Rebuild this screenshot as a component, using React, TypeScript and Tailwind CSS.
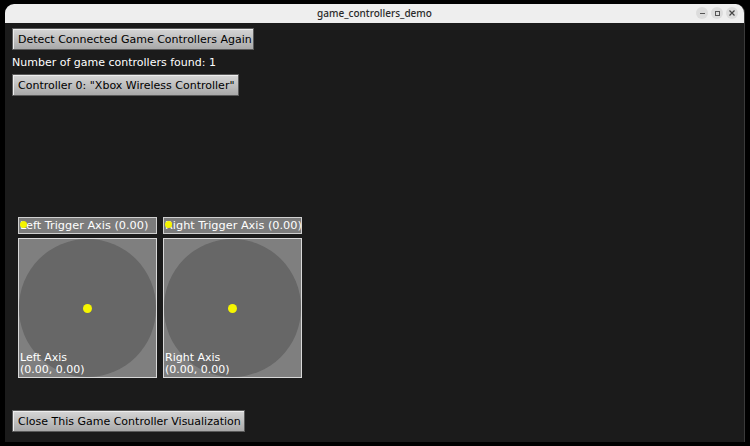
import React from "react";

const btn =
  "h-[22px] px-[5px] flex items-center whitespace-nowrap border border-[#5a5a5a] bg-gradient-to-b from-[#d6d6d6] to-[#a9a9a9] text-black text-[11px] leading-none shadow-[inset_1px_1px_0_#eeeeee]";

function TriggerBar({ label }: { label: string }) {
  return (
    <div className="relative w-[139px] h-[17px] bg-[#7c7c7c] border border-[#d0d0d0] flex items-center">
      <div className="absolute left-[1px] top-[3px] w-[7px] h-[7px] rounded-full bg-[#f5f500]" />
      <span className="pl-[1px] text-white text-[11.3px] leading-none whitespace-nowrap">{label}</span>
    </div>
  );
}

function AxisBox({ l1, l2 }: { l1: string; l2: string }) {
  return (
    <div className="relative w-[139px] h-[140px] bg-[#7f7f7f] border border-[#d8d8d8] overflow-hidden">
      <div className="absolute left-[0px] top-[0px] w-[137px] h-[138px] rounded-full bg-[#676767]" />
      <div className="absolute left-[64px] top-[65px] w-[9px] h-[9px] rounded-full bg-[#f5f500]" />
      <div className="absolute left-[1px] bottom-[1px] text-white text-[11px] leading-[12px]">
        <div>{l1}</div>
        <div>{l2}</div>
      </div>
    </div>
  );
}

export default function App() {
  return (
    <div
      className="w-[750px] h-[446px] bg-black pt-[4px] px-[5px] pb-[4px]"
      style={{ fontFamily: '"DejaVu Sans", sans-serif' }}
    >
      <div className="w-full h-full flex flex-col rounded-t-[9px] overflow-hidden border-r border-[#3a3a3a]">
        <div className="h-[19px] bg-[#eeeeee] relative flex items-center justify-center">
          <span
            className="text-[10px] text-[#2a2a2a] font-medium"
            style={{ fontFamily: '"Noto Sans", "DejaVu Sans", sans-serif' }}
          >
            game_controllers_demo
          </span>
          <div className="absolute right-[6px] top-[3px] flex gap-[3px]">
            <div className="w-[12px] h-[12px] rounded-full bg-[#dcdcdc] flex items-center justify-center">
              <div className="w-[5px] h-[1px] bg-[#555]" />
            </div>
            <div className="w-[12px] h-[12px] rounded-full bg-[#dcdcdc] flex items-center justify-center">
              <div className="w-[5px] h-[5px] border border-[#555]" />
            </div>
            <div className="w-[12px] h-[12px] rounded-full bg-[#dcdcdc] flex items-center justify-center">
              <svg width="6" height="6" viewBox="0 0 6 6">
                <path d="M0.5 0.5L5.5 5.5M5.5 0.5L0.5 5.5" stroke="#444" strokeWidth="1.2" />
              </svg>
            </div>
          </div>
        </div>
        <div className="flex-1 bg-[#1b1b1b] flex flex-col items-start pl-[7px] pt-[5px]">
          <div className={btn + " w-[242px]"}>Detect Connected Game Controllers Again</div>
          <div className="mt-[6px] h-[14px] text-white text-[11px] leading-[14px] whitespace-nowrap">
            Number of game controllers found: 1
          </div>
          <div className={btn + " mt-[4px] w-[227px]"}>Controller 0: "Xbox Wireless Controller"</div>
          <div className="mt-[121px] ml-[6px] flex gap-[6px]">
            <TriggerBar label="Left Trigger Axis (0.00)" />
            <TriggerBar label="Right Trigger Axis (0.00)" />
          </div>
          <div className="mt-[4px] ml-[6px] flex gap-[6px]">
            <AxisBox l1="Left Axis" l2="(0.00, 0.00)" />
            <AxisBox l1="Right Axis" l2="(0.00, 0.00)" />
          </div>
          <div className={btn + " mt-[32px] w-[233px]"}>Close This Game Controller Visualization</div>
        </div>
      </div>
    </div>
  );
}
